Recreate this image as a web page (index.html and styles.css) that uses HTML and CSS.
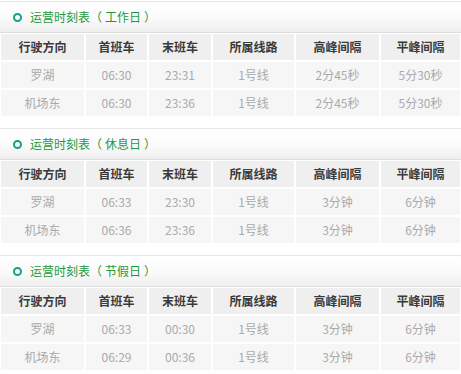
FILE: index.html
```html
<!DOCTYPE html>
<html lang="zh-CN">
<head>
<meta charset="utf-8">
<title>运营时刻表</title>
<link rel="stylesheet" href="styles.css">
</head>
<body>
<div class="page">
  <section class="block">
    <h3 class="title"><span class="dot"></span>运营时刻表<span class="lp">（</span>工作日<span class="rp">）</span></h3>
    <table class="sched">
      <colgroup><col class="c1"><col class="c2"><col class="c3"><col class="c4"><col class="c5"><col class="c6"></colgroup>
      <tr class="head"><th>行驶方向</th><th>首班车</th><th>末班车</th><th>所属线路</th><th>高峰间隔</th><th>平峰间隔</th></tr>
      <tr><td>罗湖</td><td>06:30</td><td>23:31</td><td>1号线</td><td>2分45秒</td><td>5分30秒</td></tr>
      <tr><td>机场东</td><td>06:30</td><td>23:36</td><td>1号线</td><td>2分45秒</td><td>5分30秒</td></tr>
    </table>
  </section>
  <section class="block">
    <h3 class="title"><span class="dot"></span>运营时刻表<span class="lp">（</span>休息日<span class="rp">）</span></h3>
    <table class="sched">
      <colgroup><col class="c1"><col class="c2"><col class="c3"><col class="c4"><col class="c5"><col class="c6"></colgroup>
      <tr class="head"><th>行驶方向</th><th>首班车</th><th>末班车</th><th>所属线路</th><th>高峰间隔</th><th>平峰间隔</th></tr>
      <tr><td>罗湖</td><td>06:33</td><td>23:30</td><td>1号线</td><td>3分钟</td><td>6分钟</td></tr>
      <tr><td>机场东</td><td>06:36</td><td>23:36</td><td>1号线</td><td>3分钟</td><td>6分钟</td></tr>
    </table>
  </section>
  <section class="block">
    <h3 class="title"><span class="dot"></span>运营时刻表<span class="lp">（</span>节假日<span class="rp">）</span></h3>
    <table class="sched">
      <colgroup><col class="c1"><col class="c2"><col class="c3"><col class="c4"><col class="c5"><col class="c6"></colgroup>
      <tr class="head"><th>行驶方向</th><th>首班车</th><th>末班车</th><th>所属线路</th><th>高峰间隔</th><th>平峰间隔</th></tr>
      <tr><td>罗湖</td><td>06:33</td><td>00:30</td><td>1号线</td><td>3分钟</td><td>6分钟</td></tr>
      <tr><td>机场东</td><td>06:29</td><td>00:36</td><td>1号线</td><td>3分钟</td><td>6分钟</td></tr>
    </table>
  </section>
</div>
</body>
</html>
```
FILE: styles.css
```css
html, body {
  margin: 0;
  padding: 0;
  background: #ffffff;
}
body {
  font-family: "Noto Sans CJK SC", "Liberation Sans", sans-serif;
  font-size: 12px;
}
.page {
  padding-top: 1px;
  width: 461px;
}
.block {
  margin-bottom: 11px;
}
.title {
  margin: 0;
  height: 30px;
  border-top: 1px solid #e6e6e6;
  border-bottom: 1px solid #dcdcdc;
  background: linear-gradient(to bottom, #ffffff 0%, #fbfbfb 50%, #efefef 100%);
  display: flex;
  align-items: center;
  padding-left: 13px;
  font-size: 12px;
  font-weight: normal;
  color: #1c9a3c;
  line-height: 1;
}
.dot {
  width: 5px;
  height: 5px;
  border: 2px solid #17a086;
  border-radius: 50%;
  margin-right: 8px;
  flex: none;
}
.lp {
  padding-right: 3px;
}
.rp {
  padding-left: 3px;
}
.sched {
  width: 461px;
  border-collapse: separate;
  border-spacing: 0;
  table-layout: fixed;
}
.c1 { width: 85px; }
.c2 { width: 63px; }
.c3 { width: 64px; }
.c4 { width: 83px; }
.c5 { width: 85px; }
.c6 { width: 81px; }
.sched th, .sched td {
  height: 26px;
  padding: 0;
  border: 1px solid #ffffff;
  text-align: center;
  vertical-align: middle;
  font-size: 12px;
  line-height: 26px;
}
.sched th {
  background: #efefef;
  color: #3a3a3a;
  font-weight: bold;
}
.sched td {
  background: #f6f6f6;
  color: #aaaaaa;
}
```
